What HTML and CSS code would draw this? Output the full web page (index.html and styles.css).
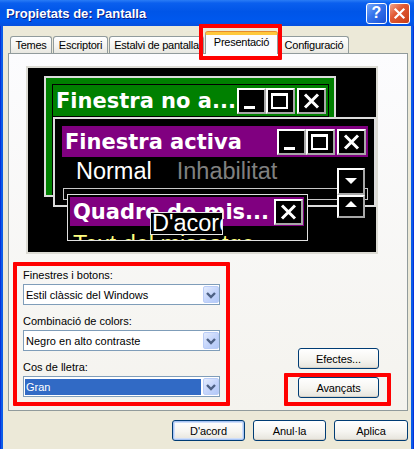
FILE: index.html
```html
<!DOCTYPE html>
<html lang="ca">
<head>
<meta charset="utf-8">
<title>Propietats de: Pantalla</title>
<link rel="stylesheet" href="styles.css">
</head>
<body>
<div class="window">
  <div class="titlebar">
    <span class="title">Propietats de: Pantalla</span>
    <div class="tb-btns">
      <span class="tb-btn tb-help">?</span>
      <span class="tb-btn tb-close"><svg width="13" height="13" viewBox="0 0 13 13"><path d="M2.5 2.5 L10.5 10.5 M10.5 2.5 L2.5 10.5" stroke="#fff" stroke-width="2.2" stroke-linecap="square"/></svg></span>
    </div>
  </div>
  <div class="client">
    <div class="tabs">
      <div class="tab w-temes">Temes</div>
      <div class="tab w-escr">Escriptori</div>
      <div class="tab w-estalvi">Estalvi de pantalla</div>
      <div class="tab tab-active w-pres">Presentació</div>
      <div class="tab w-conf">Configuració</div>
    </div>
    <div class="panel">
      <div class="preview">
        <div class="pv-win pv-inactive">
          <div class="pv-frame">
            <div class="pv-cap pv-green">
              <span class="pv-cap-text">Finestra no a...</span>
              <span class="pv-btn"><svg width="25" height="22" viewBox="0 0 25 22"><rect x="5" y="16" width="11" height="3" fill="#fff"/></svg></span>
              <span class="pv-btn"><svg width="25" height="22" viewBox="0 0 25 22"><path d="M3 3 H20 V19 H3 Z M5 6 V17 H18 V6 Z" fill="#fff" fill-rule="evenodd"/></svg></span>
              <span class="pv-btn pv-btn-close"><svg width="25" height="22" viewBox="0 0 25 22"><path d="M6 4.5 L19 17.5 M19 4.5 L6 17.5" stroke="#fff" stroke-width="3"/></svg></span>
            </div>
          </div>
        </div>
        <div class="pv-win pv-active">
          <div class="pv-cap pv-purple">
            <span class="pv-cap-text">Finestra activa</span>
            <span class="pv-btn"><svg width="25" height="22" viewBox="0 0 25 22"><rect x="5" y="16" width="11" height="3" fill="#fff"/></svg></span>
            <span class="pv-btn"><svg width="25" height="22" viewBox="0 0 25 22"><path d="M3 3 H20 V19 H3 Z M5 6 V17 H18 V6 Z" fill="#fff" fill-rule="evenodd"/></svg></span>
            <span class="pv-btn pv-btn-close"><svg width="25" height="22" viewBox="0 0 25 22"><path d="M6 4.5 L19 17.5 M19 4.5 L6 17.5" stroke="#fff" stroke-width="3"/></svg></span>
          </div>
          <div class="pv-text"><span>Normal</span><span class="pv-disabled">Inhabilitat</span></div>
          <div class="pv-clientbox"></div>
        </div>
        <div class="pv-scroll pv-scroll-down"><svg width="24" height="23" viewBox="0 0 24 23"><polygon points="6,8 18,8 12,14" fill="#fff"/></svg></div>
        <div class="pv-scroll pv-scroll-up"><svg width="24" height="19" viewBox="0 0 24 19"><polygon points="6,10 18,10 12,4" fill="#fff"/></svg></div>
        <div class="pv-msg">
          <div class="pv-cap pv-purple pv-cap-msg">
            <span class="pv-cap-text">Quadre de mis...</span>
            <span class="pv-btn pv-btn-msg"><svg width="25" height="22" viewBox="0 0 25 22"><path d="M6 4.5 L19 17.5 M19 4.5 L6 17.5" stroke="#fff" stroke-width="3"/></svg></span>
          </div>
          <div class="pv-msg-text">Text del missatge</div>
        </div>
        <div class="pv-ok">D'acord</div>
      </div>
      <div class="controls">
        <div class="fields">
          <div class="field">
            <div class="field-label">Finestres i botons:</div>
            <div class="select"><span class="select-text">Estil clàssic del Windows</span><span class="dd-btn"><svg width="14" height="15" viewBox="0 0 14 15"><polyline points="3,6 7,10 11,6" fill="none" stroke="#4d6185" stroke-width="2.4"/></svg></span></div>
          </div>
          <div class="field">
            <div class="field-label">Combinació de colors:</div>
            <div class="select"><span class="select-text">Negro en alto contraste</span><span class="dd-btn"><svg width="14" height="15" viewBox="0 0 14 15"><polyline points="3,6 7,10 11,6" fill="none" stroke="#4d6185" stroke-width="2.4"/></svg></span></div>
          </div>
          <div class="field">
            <div class="field-label">Cos de lletra:</div>
            <div class="select"><span class="select-text select-hl">Gran</span><span class="dd-btn"><svg width="14" height="15" viewBox="0 0 14 15"><polyline points="3,6 7,10 11,6" fill="none" stroke="#4d6185" stroke-width="2.4"/></svg></span></div>
          </div>
        </div>
        <div class="side">
          <button class="btn">Efectes...</button>
          <button class="btn">Avançats</button>
        </div>
      </div>
    </div>
    <div class="footer">
      <button class="btn btn-default w-ok">D'acord</button>
      <button class="btn w-ok">Anul·la</button>
      <button class="btn w-apply">Aplica</button>
    </div>
  </div>
  <div class="mark mark-tab"></div>
  <div class="mark mark-fields"></div>
  <div class="mark mark-adv"></div>
</div>
</body>
</html>
```
FILE: styles.css
```css
* { box-sizing: border-box; }
html, body { margin: 0; padding: 0; }
body {
  width: 414px;
  height: 449px;
  overflow: hidden;
  font-family: "Liberation Sans", Arial, sans-serif;
  font-size: 11px;
  color: #000;
  background: #0b5ce8;
}
.window {
  position: relative;
  width: 414px;
  height: 449px;
  background: #0b5ce8;
  box-shadow: inset 1px 0 #0831d9, inset -1px 0 #0831d9;
}
.titlebar {
  height: 26px;
  display: flex;
  align-items: center;
  justify-content: space-between;
  padding: 0 4px 0 6px;
  background: linear-gradient(#2a7cf6 0%, #0a5fee 12%, #0055e8 45%, #0058ee 80%, #0650df 100%);
}
.title {
  color: #fff;
  font-weight: bold;
  font-size: 13px;
  text-shadow: 1px 1px #0a1a80;
}
.tb-btns { display: flex; gap: 2px; }
.tb-btn {
  width: 21px;
  height: 21px;
  border: 1px solid #fff;
  border-radius: 3px;
  display: flex;
  align-items: center;
  justify-content: center;
  color: #fff;
}
.tb-help {
  background: linear-gradient(135deg, #78a8fa 0%, #3473ec 45%, #1c52d6 100%);
  font-weight: bold;
  font-size: 16px;
}
.tb-close {
  background: linear-gradient(135deg, #f2a48a 0%, #e25a34 40%, #c83c14 100%);
}
.client {
  margin: 0 3px;
  height: 423px;
  background: #ece9d8;
  padding: 6px 3px 0 5px;
}
.tabs {
  display: flex;
  align-items: flex-end;
  height: 21px;
  padding-left: 2px;
  position: relative;
  z-index: 1;
}
.tab {
  height: 17px;
  margin-right: 1px;
  border: 1px solid #919b9c;
  border-bottom: none;
  border-radius: 3px 3px 0 0;
  background: linear-gradient(#ffffff, #f3f3ef 60%, #e8e7e0);
  padding-top: 2px;
  text-align: center;
  white-space: nowrap;
  letter-spacing: -0.25px;
}
.w-temes { width: 42px; }
.w-escr { width: 55px; }
.w-estalvi { width: 95px; }
.w-pres { width: 73px; }
.w-conf { width: 70px; }
.tab-active {
  height: 22px;
  margin-bottom: -1px;
  background: #fcfcfe;
  border-top: 3px solid #ffc83c;
  box-shadow: 0 -1px 0 #e68b2c;
  padding-top: 1px;
}
.panel {
  height: 358px;
  border: 1px solid #919b9c;
  background: linear-gradient(#fcfcfe, #f4f3ee);
  padding: 12px 0 0 14px;
}
.preview {
  position: relative;
  width: 352px;
  height: 188px;
  margin-left: 3px;
  border: 2px solid #dcdbd4;
  background: #000;
  overflow: hidden;
}
.pv-win { position: absolute; border: 2px solid #dcdcdc; }
.pv-inactive {
  left: 16px;
  top: 8px;
  width: 292px;
  height: 121px;
  background: #008000;
  padding: 6px 5px 0 6px;
  display: flex;
  flex-direction: column;
}
.pv-frame {
  flex: 1;
  border: 1px solid #000;
  border-bottom: none;
  background: #000;
}
.pv-active {
  left: 25px;
  top: 49px;
  width: 323px;
  height: 90px;
  background: #000;
  padding: 7px 6px 0 7px;
}
.pv-cap {
  display: flex;
  align-items: center;
  height: 31px;
  padding: 0 2px 0 3px;
}
.pv-green { background: #008000; }
.pv-purple { background: #800080; }
.pv-cap-text {
  flex: 1;
  min-width: 0;
  overflow: hidden;
  white-space: nowrap;
  font-family: "DejaVu Sans", Verdana, sans-serif;
  font-weight: bold;
  font-size: 21px;
  color: #fff;
}
.pv-btn {
  width: 29px;
  height: 26px;
  border: 2px solid;
  border-color: #ffffff #a8a8a8 #a8a8a8 #ffffff;
  background: #000;
  display: flex;
  align-items: center;
  justify-content: center;
  flex: none;
}
.pv-btn-close { margin-left: 2px; }
.pv-text {
  margin: 1px 0 0 14px;
  display: flex;
  gap: 25px;
  font-size: 23.5px;
  line-height: 27px;
  color: #fff;
  white-space: nowrap;
}
.pv-disabled { color: #808080; }
.pv-clientbox {
  margin: 3px 0 0 1px;
  width: 305px;
  height: 12px;
  border: 1px solid #c8c8c8;
}
.pv-scroll {
  position: absolute;
  left: 309px;
  width: 28px;
  border: 2px solid;
  border-color: #ffffff #a8a8a8 #a8a8a8 #ffffff;
  background: #000;
}
.pv-scroll-down { top: 100px; height: 27px; }
.pv-scroll-up { top: 127px; height: 23px; }
.pv-scroll svg { display: block; }
.pv-msg {
  position: absolute;
  left: 39px;
  top: 126px;
  width: 241px;
  height: 47px;
  border: 1px solid #e0e0e0;
  background: #000;
  padding: 2px 3px 0 2px;
  overflow: hidden;
}
.pv-cap-msg { height: 29px; padding-right: 1px; }
.pv-btn-msg { height: 26px; }
.pv-msg-text {
  margin: 5px 0 0 3px;
  font-size: 23.5px;
  line-height: 27px;
  color: #ffff80;
  white-space: nowrap;
}
.pv-ok {
  position: absolute;
  left: 122px;
  top: 144px;
  width: 73px;
  height: 23px;
  border: 1px solid #e8e8e8;
  background: #000;
  color: #fff;
  font-size: 23.5px;
  line-height: 21px;
  padding-left: 1px;
  white-space: nowrap;
  overflow: hidden;
}
.controls {
  display: flex;
  align-items: flex-end;
  margin-top: 15px;
}
.fields { width: 197px; }
.field + .field { margin-top: 10px; }
.field-label {
  line-height: 13px;
  margin-bottom: 2px;
  white-space: nowrap;
}
.select {
  display: flex;
  align-items: center;
  height: 21px;
  border: 1px solid #7f9db9;
  background: #fff;
  padding: 1px 0 1px 0;
}
.select-text {
  flex: 1;
  padding-left: 2px;
  white-space: nowrap;
  overflow: hidden;
  height: 16px;
  line-height: 16px;
}
.select-hl {
  margin: 0 2px 0 1px;
  background: #316ac5;
  color: #fff;
  padding-left: 1px;
}
.dd-btn {
  width: 16px;
  height: 17px;
  border: 1px solid #bacdf7;
  border-radius: 2px;
  background: linear-gradient(135deg, #e4ecfd 0%, #c6d6fb 50%, #b2c8f8 100%);
  display: flex;
  align-items: center;
  justify-content: center;
}
.side {
  display: flex;
  flex-direction: column;
  gap: 8px;
  width: 81px;
  margin-left: 78px;
  margin-bottom: -1px;
}
.btn {
  height: 21px;
  border: 1px solid #003c74;
  border-radius: 3px;
  background: linear-gradient(#ffffff 0%, #f6f5f1 55%, #e6e4dc 100%);
  box-shadow: inset 0 -1px 0 #d6d0c5;
  font-family: "Liberation Sans", Arial, sans-serif;
  font-size: 11px;
  color: #000;
  padding: 0;
  letter-spacing: -0.1px;
}
.footer {
  display: flex;
  justify-content: flex-end;
  gap: 8px;
  margin-top: 9px;
}
.w-ok { width: 73px; }
.w-apply { width: 74px; }
.btn-default {
  box-shadow: inset 0 0 0 1px #a8c4f4, inset 0 0 0 2px #cfdef9;
}
.mark {
  position: absolute;
  border: 4px solid #ff0000;
  border-radius: 1px;
  z-index: 5;
}
.mark-tab { left: 199px; top: 24px; width: 83px; height: 36px; }
.mark-fields { left: 13px; top: 262px; width: 217px; height: 144px; }
.mark-adv { left: 284px; top: 373px; width: 107px; height: 33px; }
```
